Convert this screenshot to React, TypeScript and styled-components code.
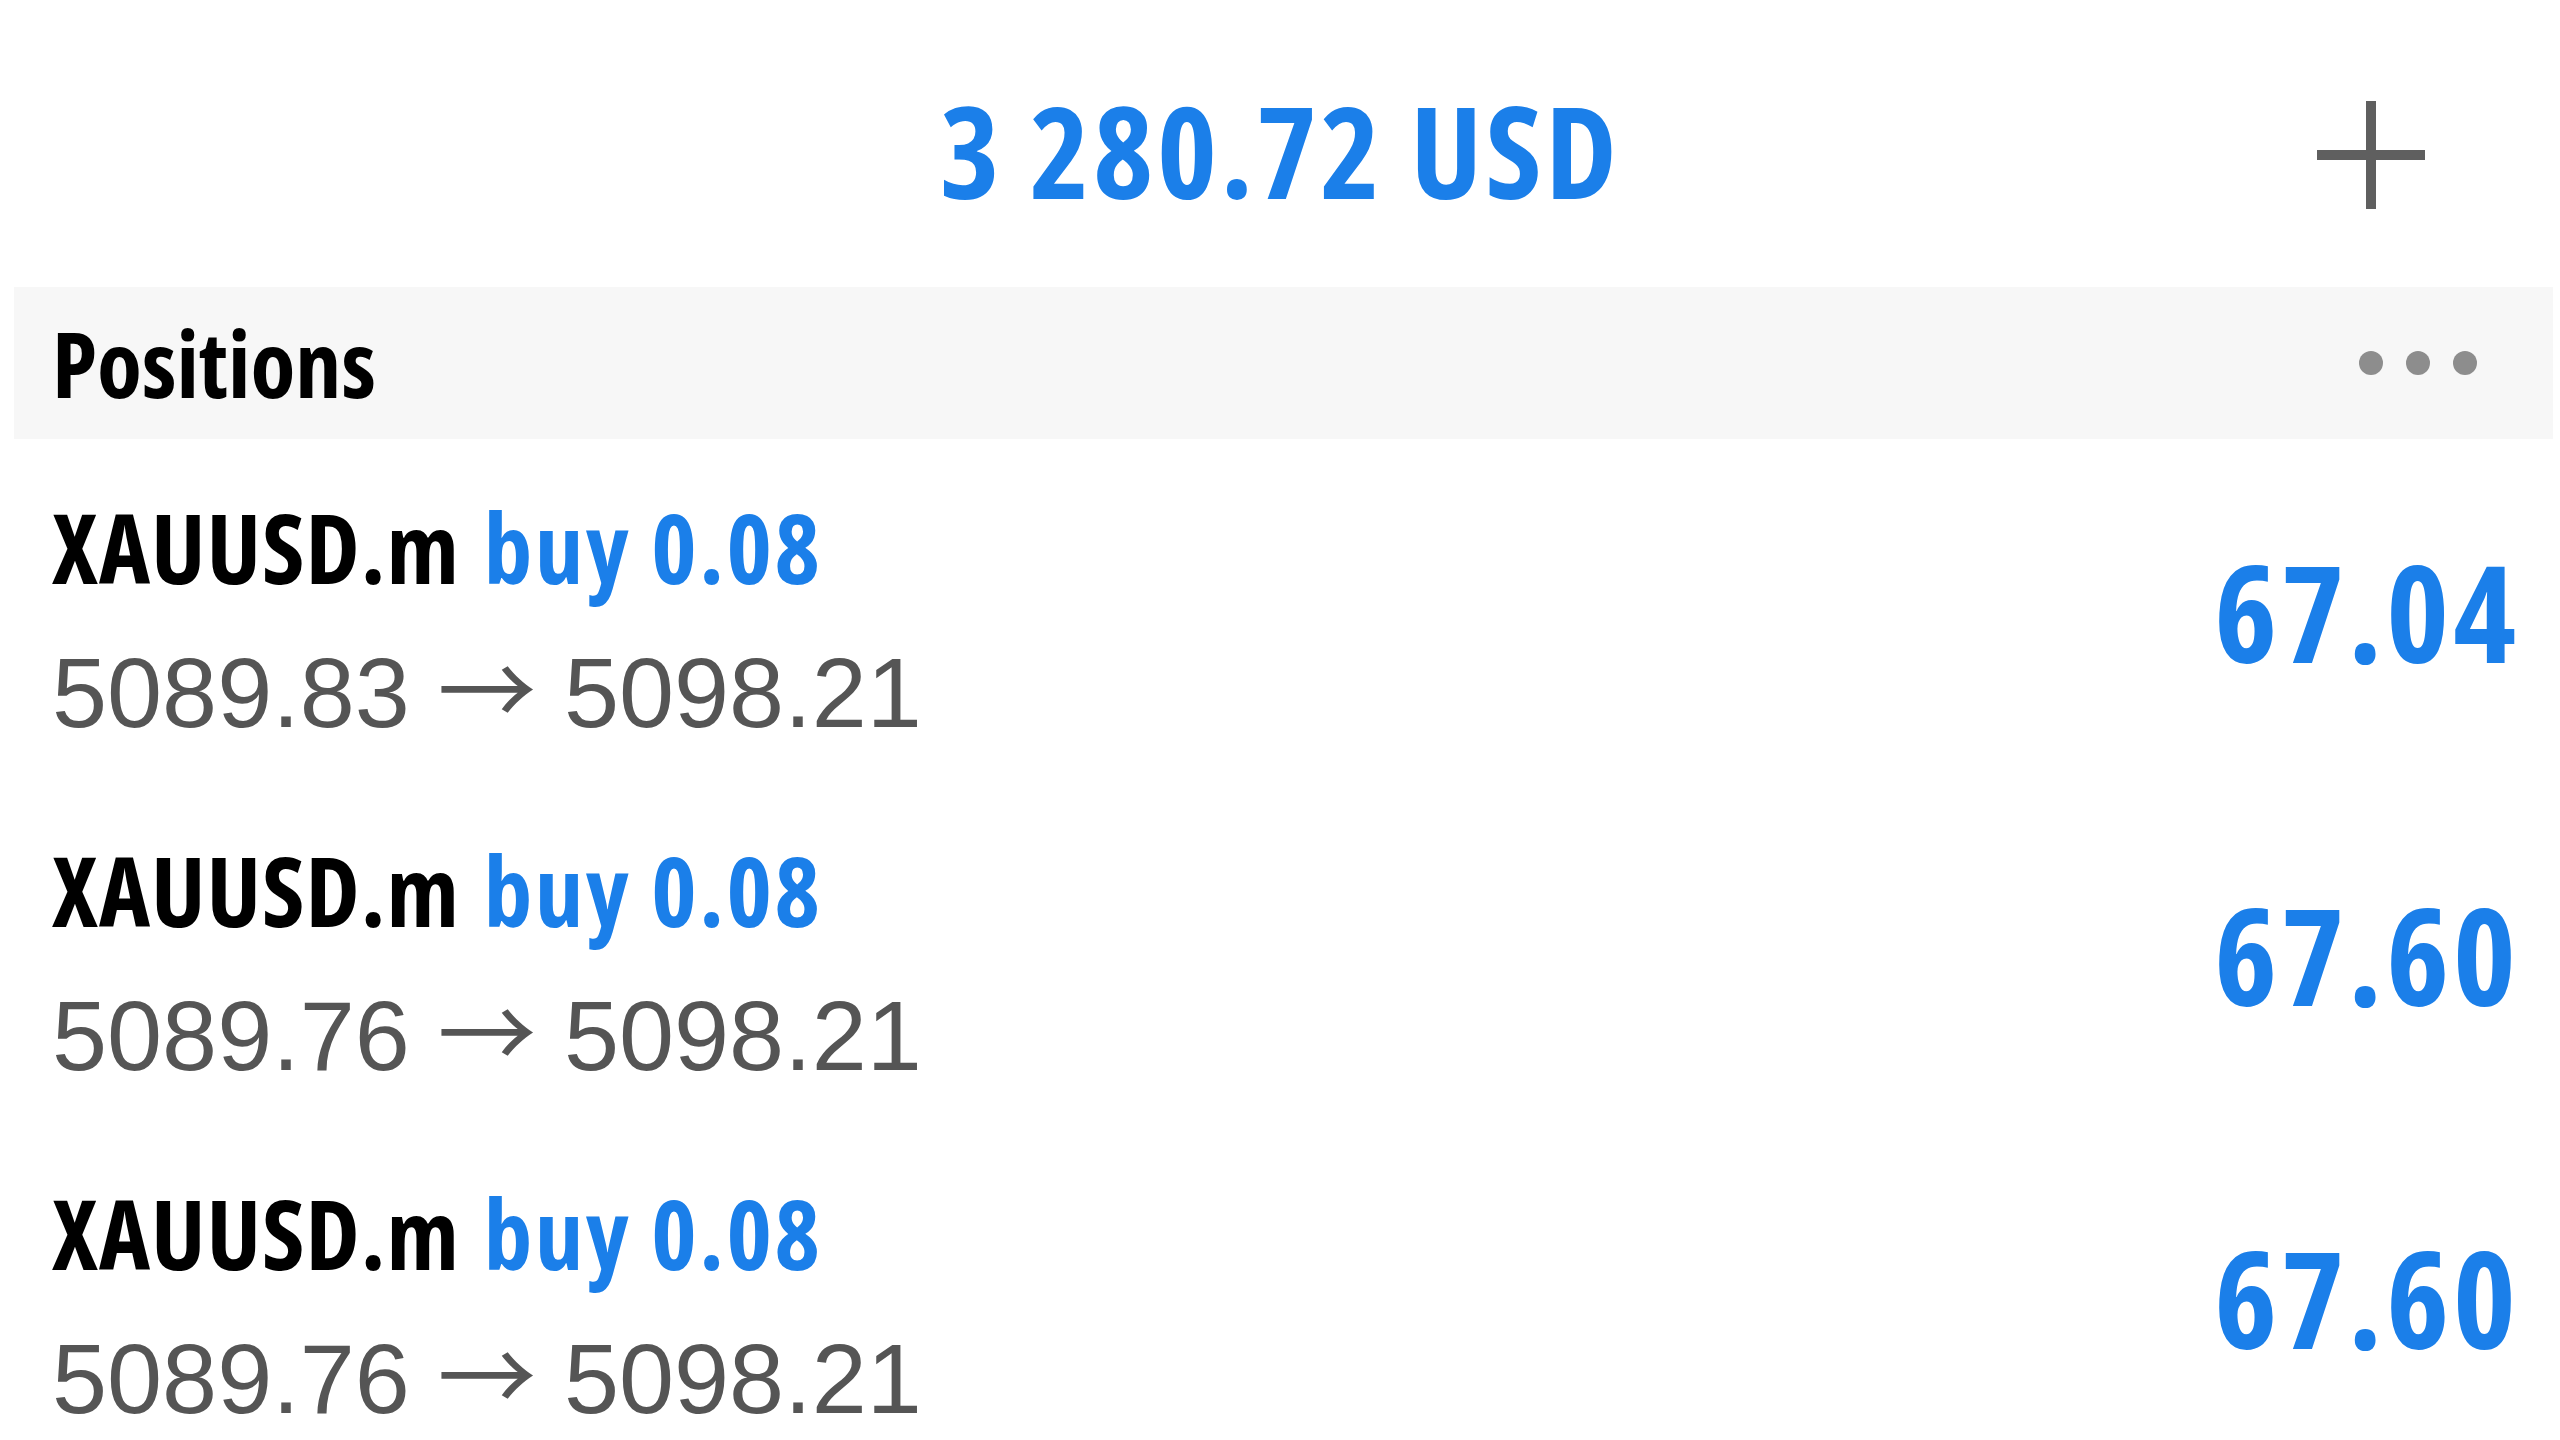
import React from "react";
import styled, {createGlobalStyle} from "styled-components";

const GlobalStyle = createGlobalStyle`
  html, body {
    margin: 0;
    padding: 0;
    background: #ffffff;
  }
  body {
    font-family: "Liberation Sans", Arial, sans-serif;
  }
`;

const BLUE = "#1b7fe9";
const CONDENSED = `"Open Sans", "DejaVu Sans", sans-serif`;

const Page = styled.div`
  width: 2560px;
  min-height: 1440px;
  overflow: hidden;
`;

const Header = styled.div`
  height: 287px;
  box-sizing: border-box;
  padding-top: 22px;
  display: grid;
  grid-template-columns: 1fr auto 1fr;
  align-items: center;
`;

const Balance = styled.div`
  grid-column: 2;
  margin-bottom: 10px;
  font-family: ${CONDENSED};
  font-stretch: 75%;
  font-weight: 700;
  font-size: 128px;
  letter-spacing: 3.5px;
  line-height: 1;
  color: ${BLUE};
  white-space: nowrap;
`;

const AddButton = styled.button`
  grid-column: 3;
  justify-self: end;
  margin-right: 135px;
  width: 108px;
  height: 108px;
  padding: 0;
  border: 0;
  background: transparent;
  display: flex;
  align-items: center;
  justify-content: center;
`;

const SectionBar = styled.div`
  margin: 0 7px 0 14px;
  height: 152px;
  background: #f7f7f7;
  display: flex;
  align-items: center;
  justify-content: space-between;
  padding: 0 76px 0 38px;
`;

const SectionTitle = styled.div`
  font-family: ${CONDENSED};
  font-stretch: 75%;
  font-weight: 700;
  font-size: 92px;
  line-height: 1;
  color: #000;
`;

const Dots = styled.div`
  display: flex;
  gap: 23px;
`;

const Dot = styled.span`
  width: 24px;
  height: 24px;
  border-radius: 50%;
  background: #8d8d8d;
`;

const Row = styled.div`
  height: 343px;
  display: flex;
  align-items: center;
  justify-content: space-between;
  padding: 0 40px 0 52px;
`;

const Info = styled.div`
  display: flex;
  flex-direction: column;
  align-self: stretch;
  padding-top: 59px;
  gap: 48px;
`;

const Title = styled.div`
  font-family: ${CONDENSED};
  font-stretch: 75%;
  font-weight: 700;
  font-size: 97px;
  letter-spacing: 1px;
  line-height: 1;
  color: #000;
  white-space: nowrap;
`;

const Side = styled.span`
  margin-left: 4px;
  letter-spacing: 2.5px;
  color: ${BLUE};
`;

const Prices = styled.div`
  font-family: "Liberation Sans", Arial, sans-serif;
  font-size: 99px;
  line-height: 1;
  color: #555555;
  white-space: nowrap;
`;

const Arrow = styled.span`
  font-family: "Noto Sans CJK JP", "DejaVu Sans", sans-serif;
  font-weight: 400;
  line-height: 0;
`;

const Profit = styled.div`
  font-family: ${CONDENSED};
  font-stretch: 75%;
  font-weight: 700;
  font-size: 134px;
  letter-spacing: 4px;
  line-height: 1;
  color: ${BLUE};
`;

const positions = [
    {symbol: "XAUUSD.m", side: "buy", volume: "0.08", open: "5089.83", current: "5098.21", profit: "67.04"},
    {symbol: "XAUUSD.m", side: "buy", volume: "0.08", open: "5089.76", current: "5098.21", profit: "67.60"},
    {symbol: "XAUUSD.m", side: "buy", volume: "0.08", open: "5089.76", current: "5098.21", profit: "67.60"},
];

const App: React.FC = () => {
    return (
        <Page>
            <GlobalStyle/>
            <Header>
                <Balance>3 280.72 USD</Balance>
                <AddButton aria-label="Add">
                    <svg width="108" height="108" viewBox="0 0 108 108">
                        <rect x="0" y="49" width="108" height="10" fill="#5f5f5f"/>
                        <rect x="49" y="0" width="10" height="108" fill="#5f5f5f"/>
                    </svg>
                </AddButton>
            </Header>
            <SectionBar>
                <SectionTitle>Positions</SectionTitle>
                <Dots>
                    <Dot/>
                    <Dot/>
                    <Dot/>
                </Dots>
            </SectionBar>
            {positions.map((p, i) => (
                <Row key={i}>
                    <Info>
                        <Title>
                            {p.symbol}<Side> {p.side} {p.volume}</Side>
                        </Title>
                        <Prices>{p.open} <Arrow>→</Arrow> {p.current}</Prices>
                    </Info>
                    <Profit>{p.profit}</Profit>
                </Row>
            ))}
        </Page>
    );
};

export default App;
